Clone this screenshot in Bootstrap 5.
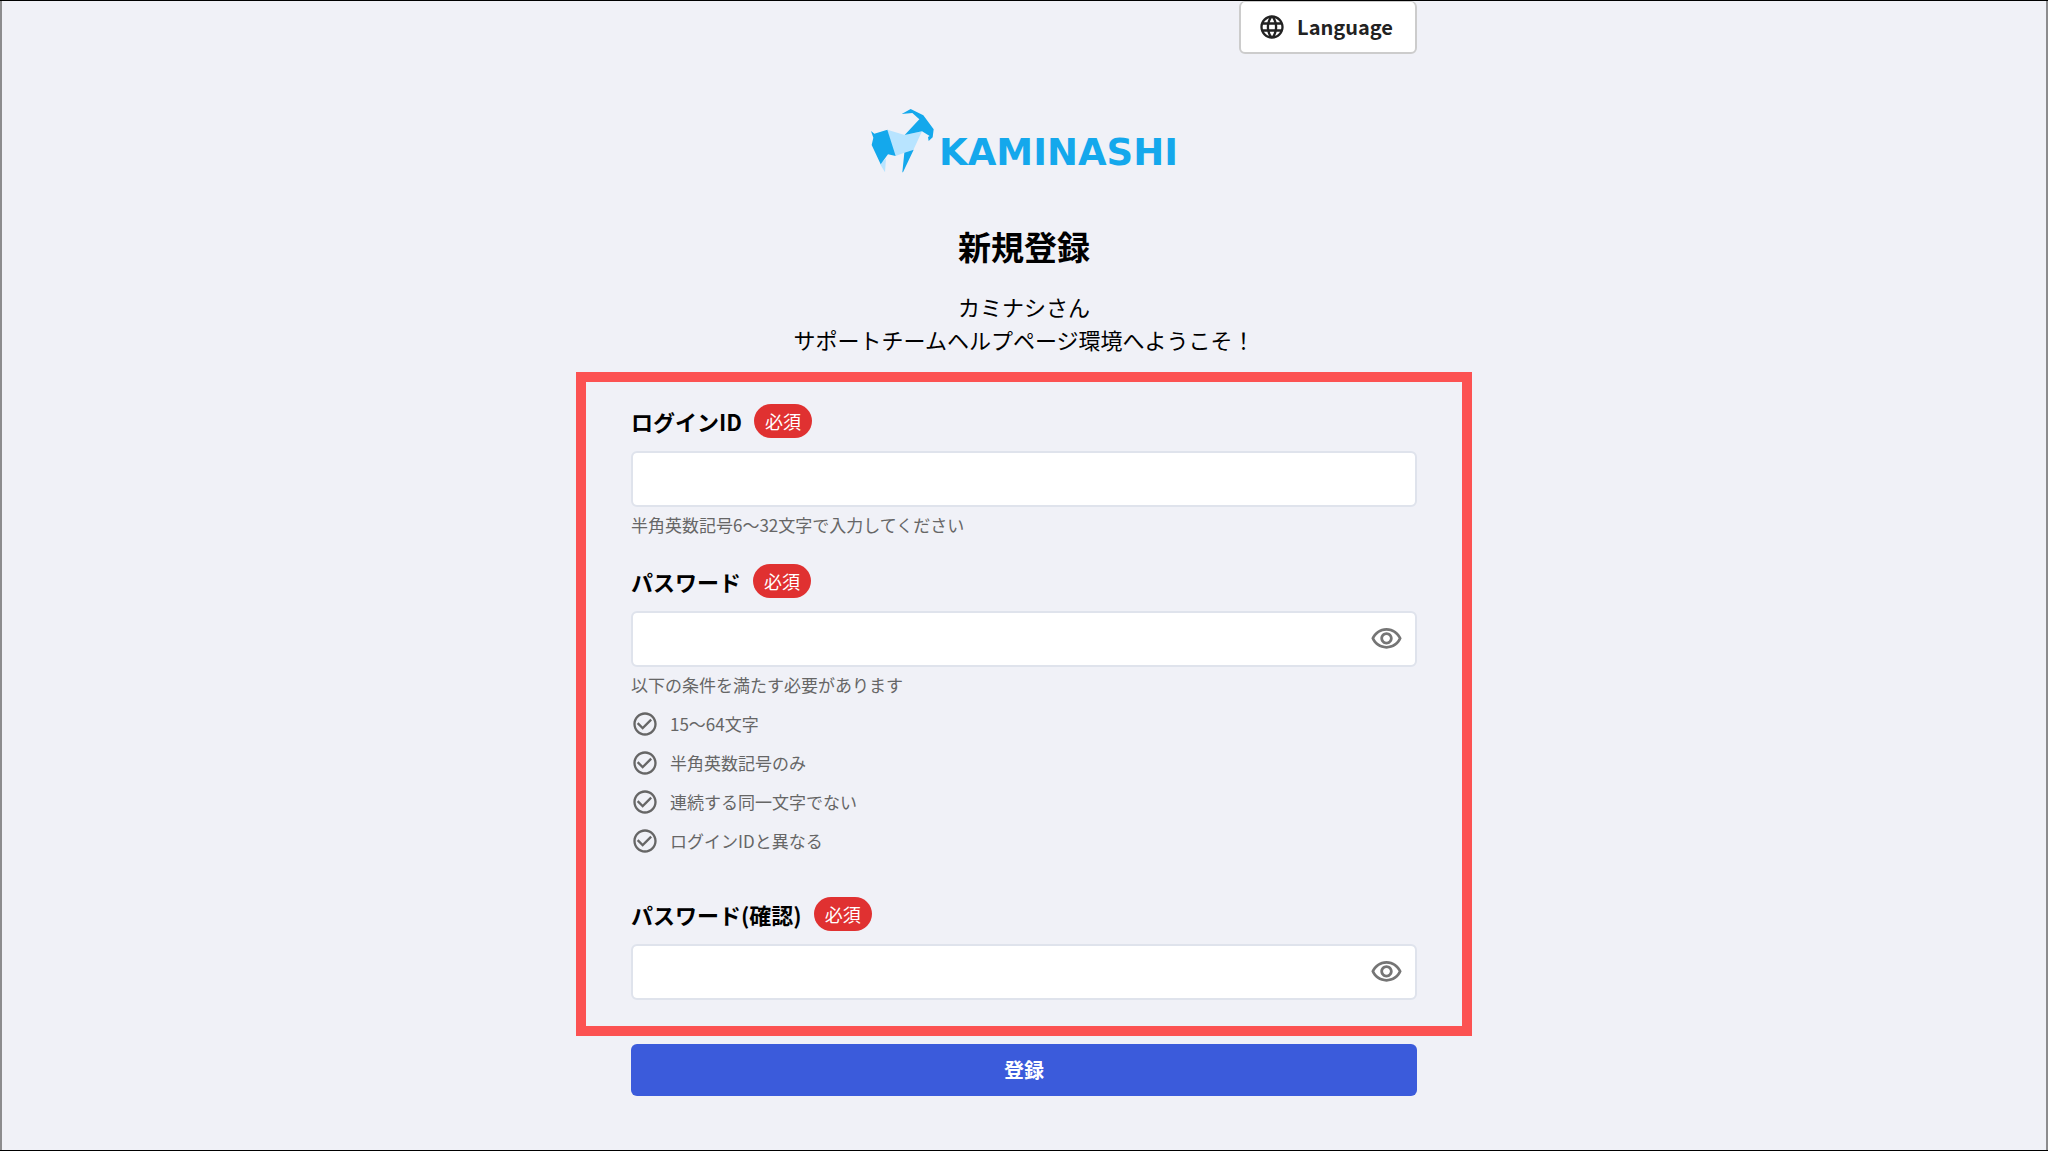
<!DOCTYPE html>
<html lang="ja">
<head>
<meta charset="utf-8">
<meta name="viewport" content="width=device-width, initial-scale=1">
<title>新規登録 | KAMINASHI</title>
<link href="https://cdn.jsdelivr.net/npm/bootstrap@5.3.0/dist/css/bootstrap.min.css" rel="stylesheet">
<style>
  body {
    font-family: "Noto Sans CJK JP", sans-serif;
    color: #000;
    background: #f0f1f7;
    border: solid #000;
    border-width: 1px 0;
    box-shadow: inset 2px 0 #8c8c8e, inset -2px 0 #8c8c8e;
  }
  .signup { max-width: 896px; }
  .inset-x { padding-left: 55px; padding-right: 55px; }
  .btn-language {
    height: 53px;
    padding: 0 22px 0 17px;
    gap: 11px;
    font-size: 20px;
    font-weight: 700;
    line-height: 32px;
    color: #222;
    background: #fff;
    border: 2px solid #ccc;
    border-top-width: 1px;
    border-radius: 6px;
  }
  .btn-language:hover { background: #f8f8fa; border-color: #ccc; }
  .brand { margin-top: 54px; gap: 4px; }
  .brand-name {
    font: 700 37px/41px "DejaVu Sans", sans-serif;
    color: #14a8ec;
  }
  .page-title { margin: 53px 0 24px; font-size: 33px; font-weight: 700; line-height: 40px; }
  .welcome { margin-bottom: 16px; font-size: 22px; line-height: 33px; }
  .form-area { padding-top: 22px; padding-bottom: 26px; border: 10px solid #fc5252; }
  .form-area.inset-x { padding-left: 45px; padding-right: 45px; }
  .field-label { min-height: 34px; margin-bottom: 13px; gap: 12px; font-size: 22px; font-weight: 700; line-height: 32px; }
  .required { padding: 0 11px; font-size: 18px; font-weight: 400; line-height: 34px; color: #fff; background: #e03131; }
  .field-input { height: 56px; font-size: 22px; border: 2px solid #dfe3ec; border-radius: 6px; }
  .has-eye { padding-right: 60px; }
  .btn-eye { right: 14px; color: #757575; }
  .hint { margin: 6px 0 0; font-size: 17px; line-height: 24px; color: #666; }
  .rules { margin: 13px 0 42px; gap: 11px; font-size: 17px; line-height: 28px; color: #666; }
  .rules li { gap: 11px; }
  .field-gap { margin-bottom: 27px; }
  .btn-submit {
    height: 52px;
    margin-top: 8px;
    padding: 0;
    font-size: 20px;
    font-weight: 700;
    color: #fff;
    background: #3b5bdb;
    border: 0;
    border-radius: 6px;
  }
  .btn-submit:hover { color: #fff; background: #364fc7; }
</style>
</head>
<body class="min-vh-100">
<svg class="d-none" aria-hidden="true">
  <symbol id="i-check" viewBox="0 0 24 24"><path fill="currentColor" d="M16.59 7.58 10 14.17l-3.59-3.58L5 12l5 5 8-8zM12 2C6.48 2 2 6.48 2 12s4.48 10 10 10 10-4.48 10-10S17.520 2 12 2m0 18c-4.420 0-8-3.580-8-8s3.580-8 8-8 8 3.580 8 8-3.580 8-8 8"/></symbol>
  <symbol id="i-eye" viewBox="0 0 24 24"><path fill="currentColor" d="M12 6c3.790 0 7.170 2.130 8.820 5.500C19.170 14.870 15.790 17 12 17s-7.170-2.130-8.820-5.500C4.830 8.130 8.210 6 12 6m0-2C7 4 2.730 7.110 1 11.500 2.730 15.890 7 19 12 19s9.270-3.110 11-7.500C21.270 7.110 17 4 12 4m0 5c1.380 0 2.500 1.120 2.500 2.500S13.380 14 12 14s-2.500-1.120-2.500-2.500S10.620 9 12 9m0-2c-2.480 0-4.500 2.020-4.500 4.500S9.520 16 12 16s4.500-2.020 4.500-4.500S14.480 7 12 7"/></symbol>
</svg>

<main class="signup mx-auto">
  <header class="inset-x d-flex justify-content-end">
    <button type="button" class="btn btn-language d-flex align-items-center">
      <svg width="28" height="28" viewBox="0 0 24 24" fill="currentColor" aria-hidden="true"><path d="M11.990 2C6.470 2 2 6.480 2 12s4.470 10 9.990 10C17.520 22 22 17.520 22 12S17.520 2 11.990 2zm6.930 6h-2.950c-.32-1.250-.78-2.450-1.380-3.560 1.840.63 3.370 1.910 4.330 3.560zM12 4.040c.83 1.200 1.480 2.530 1.910 3.960h-3.820c.43-1.430 1.080-2.760 1.910-3.960zM4.260 14C4.100 13.360 4 12.690 4 12s.1-1.360.26-2h3.380c-.08.66-.14 1.320-.14 2s.06 1.340.14 2H4.260zm.82 2h2.950c.32 1.250.78 2.450 1.380 3.560-1.840-.63-3.370-1.900-4.330-3.560zm2.950-8H5.080c.96-1.660 2.490-2.930 4.330-3.560C8.810 5.550 8.350 6.750 8.030 8zM12 19.960c-.83-1.200-1.480-2.530-1.910-3.960h3.820c-.43 1.430-1.080 2.760-1.910 3.960zM14.340 14H9.660c-.09-.66-.16-1.320-.16-2s.07-1.350.16-2h4.680c.09.65.16 1.320.16 2s-.07 1.340-.16 2zm.25 5.560c.6-1.110 1.060-2.310 1.380-3.560h2.950c-.96 1.650-2.490 2.930-4.330 3.560zM16.360 14c.08-.66.14-1.320.14-2s-.06-1.340-.14-2h3.380c.16.64.26 1.310.26 2s-.1 1.360-.26 2h-3.380z"/></svg>
      <span>Language</span>
    </button>
  </header>

  <div class="brand d-flex justify-content-center align-items-end">
    <svg width="65" height="65" viewBox="30 24 195 195" aria-hidden="true">
      <path fill="#b8e4ff" d="M82 89 134 105 186 94 160 150 133 158 107 168 98 150ZM60 192 78 176 75 217Z"/>
      <path fill="#14a8ec" d="M125 42 152 27 190 46 221 88 218 112 206 123 204 111 209 108 186 94 134 105 178 58 157 39ZM33 93 43 101 82 89 107 168 84 163 62 193 35 135 40 113ZM133 158 161 149 129 217 127 217Z"/>
    </svg>
    <span class="brand-name">KAMINASHI</span>
  </div>

  <h1 class="page-title text-center">新規登録</h1>
  <p class="welcome text-center">カミナシさん<br>サポートチームヘルプページ環境へようこそ！</p>

  <form>
    <div class="form-area inset-x">
      <div class="field-gap">
        <label for="login-id" class="field-label d-flex align-items-center">ログインID<span class="required rounded-pill">必須</span></label>
        <input type="text" id="login-id" class="form-control field-input" aria-describedby="login-hint">
        <p id="login-hint" class="hint">半角英数記号6〜32文字で入力してください</p>
      </div>

      <div>
        <label for="password" class="field-label d-flex align-items-center">パスワード<span class="required rounded-pill">必須</span></label>
        <div class="position-relative">
          <input type="password" id="password" class="form-control field-input has-eye" aria-describedby="password-hint">
          <button type="button" class="btn btn-eye p-0 border-0 d-flex position-absolute top-50 translate-middle-y" aria-label="パスワードを表示"><svg width="33" height="33"><use href="#i-eye"/></svg></button>
        </div>
        <p id="password-hint" class="hint">以下の条件を満たす必要があります</p>
        <ul class="rules list-unstyled d-flex flex-column">
          <li class="d-flex align-items-center"><svg width="28" height="28"><use href="#i-check"/></svg>15〜64文字</li>
          <li class="d-flex align-items-center"><svg width="28" height="28"><use href="#i-check"/></svg>半角英数記号のみ</li>
          <li class="d-flex align-items-center"><svg width="28" height="28"><use href="#i-check"/></svg>連続する同一文字でない</li>
          <li class="d-flex align-items-center"><svg width="28" height="28"><use href="#i-check"/></svg>ログインIDと異なる</li>
        </ul>
      </div>

      <div>
        <label for="password-confirm" class="field-label d-flex align-items-center">パスワード(確認)<span class="required rounded-pill">必須</span></label>
        <div class="position-relative">
          <input type="password" id="password-confirm" class="form-control field-input has-eye">
          <button type="button" class="btn btn-eye p-0 border-0 d-flex position-absolute top-50 translate-middle-y" aria-label="パスワードを表示"><svg width="33" height="33"><use href="#i-eye"/></svg></button>
        </div>
      </div>
    </div>
    <div class="inset-x">
      <button type="submit" class="btn btn-submit w-100">登録</button>
    </div>
  </form>
</main>
<script src="https://cdn.jsdelivr.net/npm/bootstrap@5.3.0/dist/js/bootstrap.bundle.min.js"></script>
</body>
</html>
